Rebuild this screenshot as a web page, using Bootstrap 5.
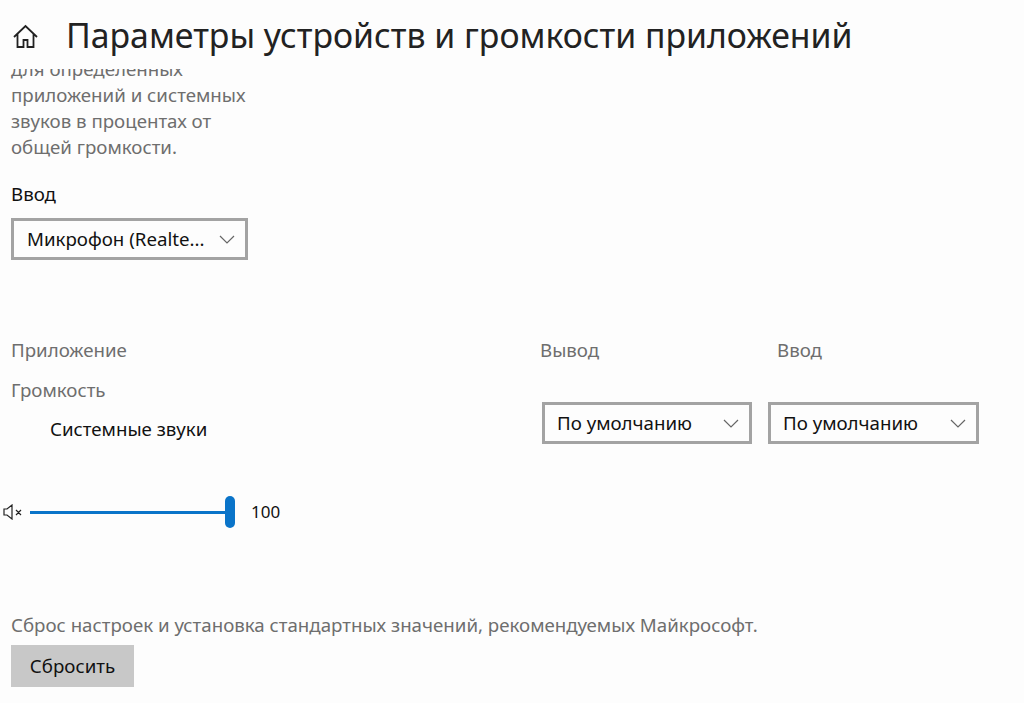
<!DOCTYPE html>
<html lang="ru">
<head>
<meta charset="utf-8">
<title>Параметры устройств и громкости приложений</title>
<link href="https://cdn.jsdelivr.net/npm/bootstrap@5.3.0/dist/css/bootstrap.min.css" rel="stylesheet">
<style>
html,body{height:100%;}
body{background:#fdfdfd;font-family:"Noto Sans","Open Sans",sans-serif;color:#111;overflow:hidden;font-size:18.7px;line-height:26px;}
.top-head{height:69px;background:#fdfdfd;position:relative;z-index:2;padding-left:12px;gap:27px;padding-top:3px;}
.top-head h1{font-size:33.8px;font-weight:400;margin:0;line-height:1;color:#222;}
.pane{padding:0 11px;margin-top:-13px;}
.muted-txt{color:#6e6e6e;}
.desc{width:240px;}
.fld-label{margin-top:21px;}
.sel{border:3px solid #a3a3a3;background:#fdfdfd;height:42px;padding:0 10px 0 13px;color:#111;white-space:nowrap;}
.sel-a{width:237px;margin-top:11px;}
.sel-b{width:211px;margin-top:39px;padding-left:12px;}
.sel-out{margin-left:2px;width:210px;}
.sel-in{margin-left:-9px;}
.cols{margin-top:77px;}
.col-app{width:529px;}
.col-out{width:237px;}
.row-vol{margin-top:14px;}
.app-name{padding-left:39px;margin-top:13px;}
.slider-row{margin-top:52px;margin-left:-9px;height:32px;}
.track{width:195px;height:3px;background:#0a74c9;margin-left:7px;}
.thumb{width:10px;height:32px;border-radius:5px;background:#0a74c9;}
.val{margin-left:16px;font-size:17px;}
.reset-note{margin-top:84px;}
.reset-btn{background:#c8c8c8;border:0;border-radius:0;height:42px;width:123px;font-size:18.7px;color:#111;padding:0;margin-top:7px;}
</style>
</head>
<body>
<header class="top-head d-flex align-items-center">
<svg width="27" height="27" viewBox="0 0 27 27" fill="none" stroke="#222" stroke-width="1.8"><path d="M2 14 13.5 3 25 14M5.5 11v13h6v-7h4v7h6V11"/></svg>
<h1>Параметры устройств и громкости приложений</h1>
</header>
<main class="pane">
<div class="desc muted-txt">для определенных приложений и системных звуков в процентах от общей громкости.</div>
<div class="fld-label">Ввод</div>
<div class="sel sel-a d-flex align-items-center justify-content-between">
<span>Микрофон (Realte...</span>
<svg width="16" height="9" viewBox="0 0 16 9" fill="none" stroke="#666" stroke-width="1.2"><path d="M1 1l7 7 7-7"/></svg>
</div>
<div class="cols d-flex">
<div class="col-app">
<div class="muted-txt">Приложение</div>
<div class="muted-txt row-vol">Громкость</div>
<div class="app-name">Системные звуки</div>
</div>
<div class="col-out">
<div class="muted-txt">Вывод</div>
<div class="sel sel-b sel-out d-flex align-items-center justify-content-between">
<span>По умолчанию</span>
<svg width="16" height="9" viewBox="0 0 16 9" fill="none" stroke="#666" stroke-width="1.2"><path d="M1 1l7 7 7-7"/></svg>
</div>
</div>
<div>
<div class="muted-txt">Ввод</div>
<div class="sel sel-b sel-in d-flex align-items-center justify-content-between">
<span>По умолчанию</span>
<svg width="16" height="9" viewBox="0 0 16 9" fill="none" stroke="#666" stroke-width="1.2"><path d="M1 1l7 7 7-7"/></svg>
</div>
</div>
</div>
<div class="slider-row d-flex align-items-center">
<svg width="21" height="16" viewBox="0 0 21 16" fill="none" stroke="#222" stroke-width="1.2"><path d="M2 5h3l5-4v14l-5-4H2zM14 6l5 5M19 6l-5 5"/></svg>
<div class="track"></div>
<div class="thumb"></div>
<div class="val">100</div>
</div>
<div class="reset-note muted-txt">Сброс настроек и установка стандартных значений, рекомендуемых Майкрософт.</div>
<button type="button" class="btn reset-btn">Сбросить</button>
</main>
</body>
</html>
